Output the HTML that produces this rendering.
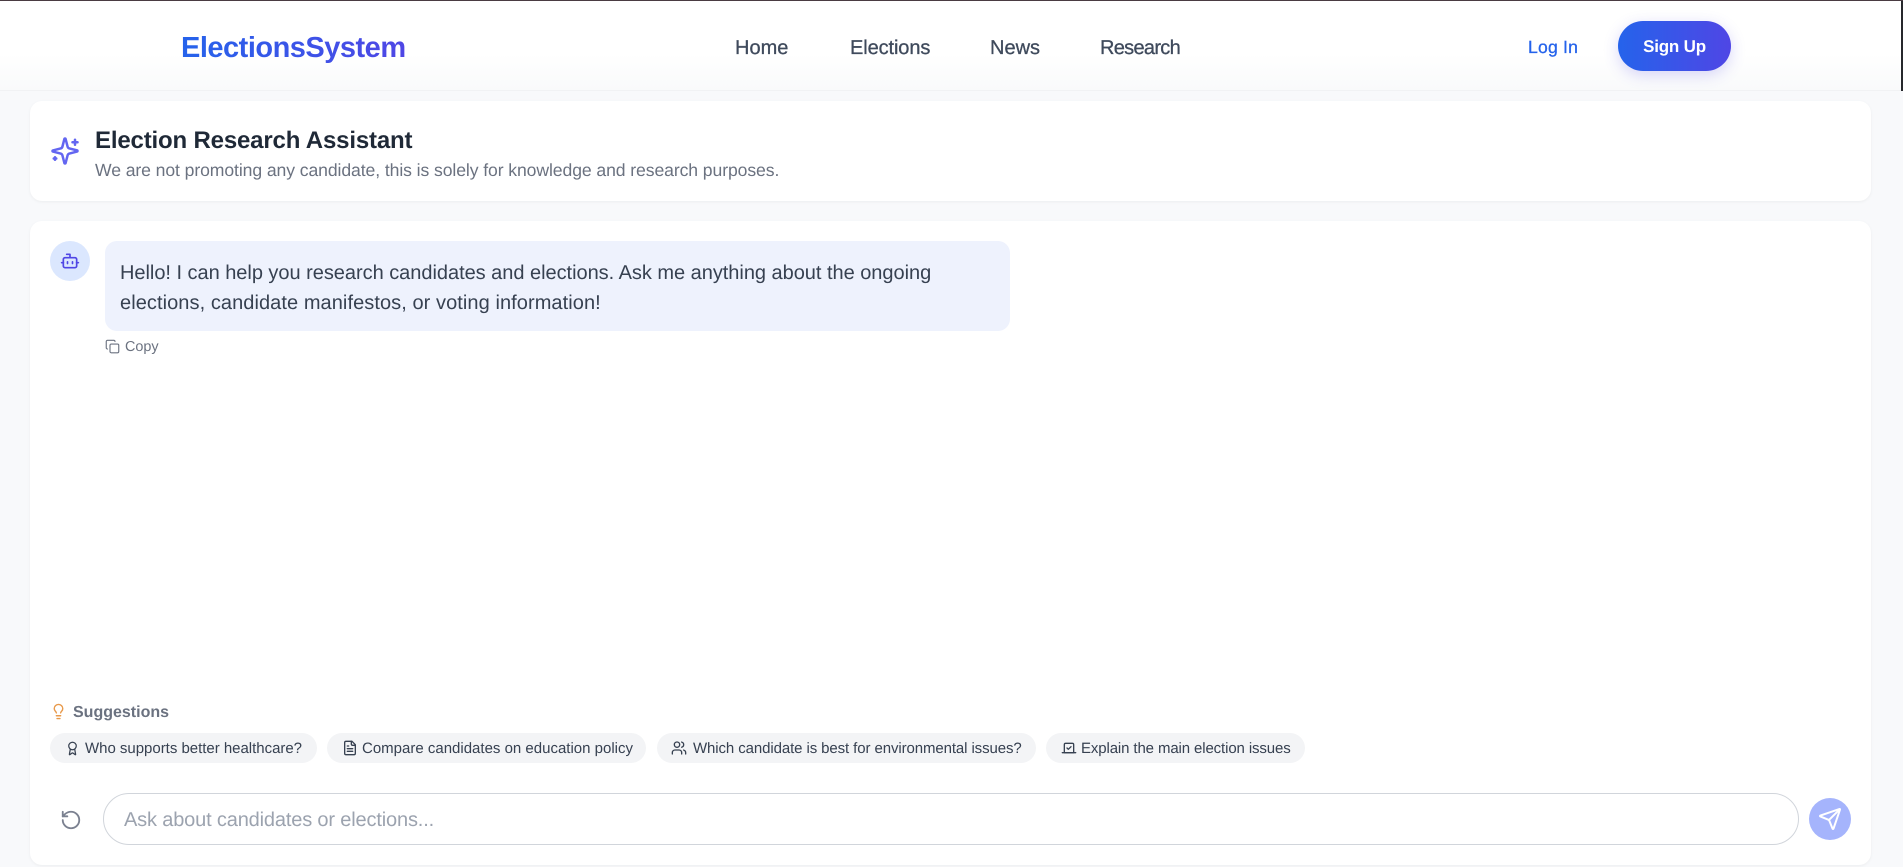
<!DOCTYPE html>
<html lang="en">
<head>
<meta charset="utf-8">
<title>ElectionsSystem - Research</title>
<style>
html,body{margin:0;padding:0;width:1903px;height:867px;overflow:hidden;background:#f8f9fb}
body{position:relative;font-family:"Liberation Sans",Arial,sans-serif;text-rendering:geometricPrecision;color:#374151}
*{box-sizing:border-box}
.a{position:absolute;white-space:nowrap}
a{text-decoration:none;color:inherit}
svg{position:absolute;fill:none;stroke:currentColor;stroke-width:2;stroke-linecap:round;stroke-linejoin:round}
.t{position:absolute;white-space:nowrap;line-height:30px;height:30px}
nav{position:absolute;left:0;top:0;width:1903px;height:91px;background:linear-gradient(to bottom,#fff 0%,#fff 60%,#f9fafb 100%);border-bottom:1px solid #f1f2f4;z-index:2}
#topline{position:absolute;left:0;top:0;width:1903px;height:1px;background:#4a3b42;z-index:5}
#rbar{position:absolute;left:1901px;top:1px;width:2px;height:90px;background:#26282c;z-index:5}
.logo{left:181px;top:28px;line-height:40px;font-size:29px;font-weight:700;letter-spacing:-.5px;background:linear-gradient(90deg,#2563eb,#4f46e5);-webkit-background-clip:text;background-clip:text;color:transparent}
.lnk{top:33px;font-size:20px;color:#3f4a5c;-webkit-text-stroke:.3px #3f4a5c}
.login{left:1528px;top:32px;font-size:17.6px;letter-spacing:.2px;color:#2563eb;-webkit-text-stroke:.3px #2563eb}
.signup{position:absolute;left:1618px;top:21px;width:113px;height:50px;border-radius:25px;background:linear-gradient(90deg,#2563eb,#4f46e5);box-shadow:0 4px 15px rgba(79,70,229,.22);color:#fff;font-size:17px;font-weight:700;letter-spacing:-.2px;line-height:52px;text-align:center}
.card{position:absolute;left:30px;width:1841px;background:#fff;border-radius:12px;box-shadow:0 1px 3px rgba(0,0,0,.05)}
.title{left:95px;top:126px;font-size:24px;font-weight:700;letter-spacing:-.17px;color:#1f2937}
.sub{left:95px;top:155px;font-size:17.6px;letter-spacing:-.09px;color:#6b7280}
.avatar{position:absolute;left:50px;top:241px;width:40px;height:40px;border-radius:50%;background:#dbe7fe}
.bubble{position:absolute;left:105px;top:241px;width:905px;height:90px;border-radius:12px;background:#eef2fd;padding:17px 15px 0;font-size:20px;line-height:30px;letter-spacing:-.03px;color:#374151;white-space:nowrap}
.copy{left:125px;top:332px;font-size:14.4px;color:#6b7280}
.sug{left:73px;top:698px;font-size:16px;font-weight:700;color:#6b7280}
.chip{position:absolute;top:733px;height:30px;border-radius:15px;background:#f3f4f6}
.ct{top:734px;font-size:15px;color:#374151}
.input{position:absolute;left:103px;top:793px;width:1696px;height:52px;border:1px solid #d1d5db;border-radius:26px;background:#fff}
.ph{left:124px;top:805px;font-size:20px;letter-spacing:-.16px;color:#9ca3af}
.send{position:absolute;left:1809px;top:798px;width:42px;height:42px;border-radius:50%;background:#a5b4fc}
</style>
</head>
<body>
<div id="topline"></div><div id="rbar"></div>
<nav>
  <a class="a logo">ElectionsSystem</a>
  <a class="t lnk" style="left:735px">Home</a>
  <a class="t lnk" style="left:850px;letter-spacing:-.1px">Elections</a>
  <a class="t lnk" style="left:990px">News</a>
  <a class="t lnk" style="left:1100px;letter-spacing:-.7px">Research</a>
  <a class="t login">Log In</a>
  <a class="signup">Sign Up</a>
</nav>

<div class="card" style="top:101px;height:100px"></div>
<svg style="left:50px;top:135.500px;color:#6366f1" width="30" height="30" viewBox="0 0 24 24"><path d="M9.937 15.5A2 2 0 0 0 8.5 14.063l-6.135-1.582a.5.5 0 0 1 0-.962L8.5 9.936A2 2 0 0 0 9.937 8.5l1.582-6.135a.5.5 0 0 1 .963 0L14.063 8.5A2 2 0 0 0 15.5 9.937l6.135 1.581a.5.5 0 0 1 0 .964L15.5 14.063a2 2 0 0 0-1.437 1.437l-1.582 6.135a.5.5 0 0 1-.963 0z"/><path d="M20 3v4"/><path d="M22 5h-4"/><path d="M4 17v2"/><path d="M5 18H3"/></svg>
<div class="t title">Election Research Assistant</div>
<div class="t sub">We are not promoting any candidate, this is solely for knowledge and research purposes.</div>

<div class="card" style="top:221px;height:644px"></div>
<div class="avatar"></div>
<svg style="left:60px;top:250.500px;color:#4f46e5" width="20" height="20" viewBox="0 0 24 24"><path d="M12 8V4H8"/><rect x="4" y="8" width="16" height="12" rx="2"/><path d="M2 14h2"/><path d="M20 14h2"/><path d="M15 13v2"/><path d="M9 13v2"/></svg>
<div class="bubble">Hello! I can help you research candidates and elections. Ask me anything about the ongoing<br><span style="letter-spacing:.07px">elections, candidate manifestos, or voting information!</span></div>
<svg style="left:105px;top:339px;color:#6b7280;stroke-width:1.8" width="15" height="15" viewBox="0 0 24 24"><rect x="8" y="8" width="14" height="14" rx="2"/><path d="M4 16c-1.100 0-2-.9-2-2V4c0-1.100.9-2 2-2h10c1.100 0 2 .9 2 2"/></svg>
<div class="t copy">Copy</div>

<svg style="left:49.500px;top:702.500px;color:#e89a4c" width="17" height="17" viewBox="0 0 24 24"><path d="M15 14c.2-1 .7-1.700 1.500-2.500 1-.9 1.500-2.200 1.500-3.500A6 6 0 0 0 6 8c0 1 .2 2.200 1.500 3.500.7.7 1.300 1.500 1.500 2.500"/><path d="M9 18h6"/><path d="M10 22h4"/></svg>
<div class="t sug">Suggestions</div>

<div class="chip" style="left:50px;width:267px"></div>
<svg style="left:65px;top:740.500px;color:#374151" width="15" height="15" viewBox="0 0 24 24"><path d="m15.477 12.890 1.515 8.526a.5.5 0 0 1-.81.470l-3.580-2.687a1 1 0 0 0-1.197 0l-3.586 2.686a.5.5 0 0 1-.81-.469l1.514-8.526"/><circle cx="12" cy="8" r="6"/></svg>
<div class="t ct" style="left:85px;letter-spacing:-.02px">Who supports better healthcare?</div>

<div class="chip" style="left:327px;width:319px"></div>
<svg style="left:342px;top:740px;color:#374151" width="16" height="16" viewBox="0 0 24 24"><path d="M15 2H6a2 2 0 0 0-2 2v16a2 2 0 0 0 2 2h12a2 2 0 0 0 2-2V7Z"/><path d="M14 2v4a2 2 0 0 0 2 2h4"/><path d="M10 9H8"/><path d="M16 13H8"/><path d="M16 17H8"/></svg>
<div class="t ct" style="left:362px;letter-spacing:0">Compare candidates on education policy</div>

<div class="chip" style="left:657px;width:379px"></div>
<svg style="left:671px;top:740px;color:#374151" width="16" height="16" viewBox="0 0 24 24"><path d="M16 21v-2a4 4 0 0 0-4-4H6a4 4 0 0 0-4 4v2"/><circle cx="9" cy="7" r="4"/><path d="M22 21v-2a4 4 0 0 0-3-3.870"/><path d="M16 3.130a4 4 0 0 1 0 7.750"/></svg>
<div class="t ct" style="left:693px;letter-spacing:-.1px">Which candidate is best for environmental issues?</div>

<div class="chip" style="left:1046px;width:259px"></div>
<svg style="left:1060.500px;top:740px;color:#374151" width="16" height="16" viewBox="0 0 24 24"><path d="m9 12 2 2 4-4"/><path d="M5 7c0-1.100.9-2 2-2h10a2 2 0 0 1 2 2v12H5V7Z"/><path d="M22 19H2"/></svg>
<div class="t ct" style="left:1081px;letter-spacing:-.12px">Explain the main election issues</div>

<svg style="left:59.500px;top:808.500px;color:#7b8190" width="22" height="22" viewBox="0 0 24 24"><path d="M3 12a9 9 0 1 0 9-9 9.750 9.750 0 0 0-6.740 2.740L3 8"/><path d="M3 3v5h5"/></svg>
<div class="input"></div>
<div class="t ph">Ask about candidates or elections...</div>
<div class="send"></div>
<svg style="left:1818px;top:807px;color:#fff" width="24" height="24" viewBox="0 0 24 24"><path d="M14.536 21.686a.5.5 0 0 0 .937-.024l6.500-19a.496.496 0 0 0-.635-.635l-19 6.500a.5.5 0 0 0-.024.937l7.930 3.180a2 2 0 0 1 1.112 1.110z"/><path d="m21.854 2.147-10.940 10.939"/></svg>
</body>
</html>
